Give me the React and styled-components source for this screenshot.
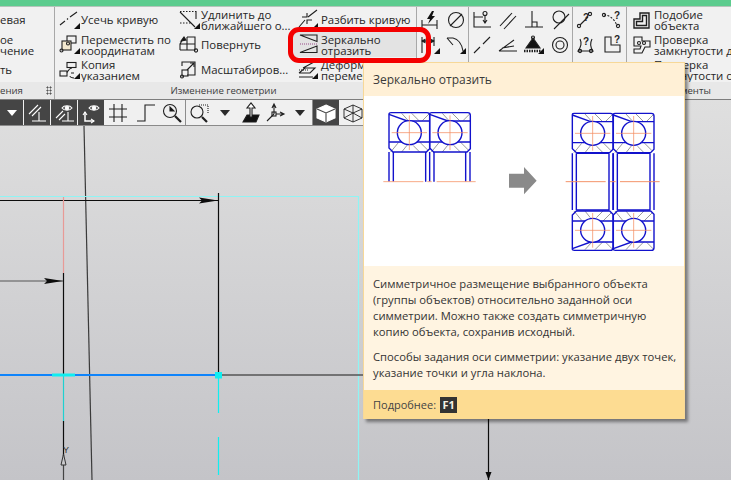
import React from "react";
import styled, {createGlobalStyle} from "styled-components";

const GlobalStyle = createGlobalStyle`
  html, body {
    margin: 0;
    padding: 0;
    background: #d0d0d2;
  }
  * {
    box-sizing: border-box;
  }
`;

const UI_FONT = `"Open Sans", "Noto Sans", "Liberation Sans", sans-serif`;

const Page = styled.div`
  position: relative;
  width: 731px;
  height: 480px;
  overflow: hidden;
  display: flex;
  flex-direction: column;
  font-family: ${UI_FONT};
  color: #262626;
  background: #f0f0f0;
`;

const TitleStrip = styled.div`
  height: 7px;
  flex: none;
  background: #5ccc8e;
  border-bottom: 1px solid #b5c4bb;
`;

const Ribbon = styled.div`
  height: 93px;
  flex: none;
  display: flex;
  background: #f1f1f1;
  border-bottom: 1px solid #7d7d7d;
`;

const Group = styled.section`
  width: ${(p) => (p.$width ? `${p.$width}px` : "auto")};
  flex: ${(p) => (p.$width ? "none" : "1")};
  min-width: 0;
  display: flex;
  flex-direction: column;
  border-right: ${(p) => (p.$last ? "none" : "1px solid #a8a8a8")};
  overflow: hidden;
`;

const GroupBody = styled.div`
  height: 75px;
  display: grid;
  grid-template-columns: ${(p) => p.$cols};
  grid-template-rows: repeat(3, 25px);
  grid-auto-flow: ${(p) => p.$flow || "row"};
`;

const GroupLabel = styled.div`
  flex: 1;
  display: flex;
  align-items: center;
  justify-content: ${(p) => p.$justify || "center"};
  padding: 0 ${(p) => p.$padRight || 0}px 0 0;
  background: #e8e8e8;
  font-size: 9.6px;
  color: #3c3c3c;
  white-space: nowrap;
`;

const Grip = styled.span`
  width: 6px;
  height: 9px;
  margin-right: 2px;
  background-image: radial-gradient(#555 45%, transparent 50%);
  background-size: 3px 3px;
`;

const Item = styled.div`
  display: flex;
  align-items: center;
  gap: ${(p) => p.$gap || 0}px;
  padding-left: ${(p) => p.$pad || 0}px;
  min-width: 0;
  background: ${(p) => (p.$active ? "#e3e3e3" : "transparent")};
  font-size: 11.4px;
  line-height: 11px;
  white-space: nowrap;
`;

const Cell = styled.div`
  display: flex;
  align-items: center;
  justify-content: center;
`;

const Glyph = styled.svg`
  width: 22px;
  height: 22px;
  flex: none;
  fill: none;
  stroke: currentColor;
  stroke-width: 1.1;
  color: #1f1f1f;
`;

const Workspace = styled.main`
  flex: 1;
  min-height: 0;
  display: flex;
  flex-direction: column;
  background: linear-gradient(#dfdfdf, #c4c4c8);
`;

const Toolbar = styled.div`
  width: 400px;
  height: 26px;
  flex: none;
  display: flex;
  background: #f0f0f0;
  border-bottom: 1px solid #8a8a8a;
`;

const Tool = styled.div`
  width: ${(p) => p.$width || 26}px;
  flex: none;
  display: flex;
  align-items: center;
  justify-content: center;
  background: ${(p) => (p.$dark ? "#454545" : "transparent")};
  border-right: ${(p) => (p.$split ? `1px solid ${p.$dark ? "#f0f0f0" : "#8d8d8d"}` : "none")};

  ${Glyph} {
    color: ${(p) => (p.$dark ? "#fff" : "#1f1f1f")};
  }
`;

const Caret = styled.span`
  width: 0;
  height: 0;
  border-left: 5px solid transparent;
  border-right: 5px solid transparent;
  border-top: 6px solid ${(p) => (p.$light ? "#fff" : "#2a2a2a")};
`;

const Drawing = styled.svg`
  flex: 1;
  min-height: 0;
  display: block;
  width: 731px;
`;

const Tooltip = styled.aside`
  position: absolute;
  left: 363px;
  top: 62px;
  width: 322px;
  height: 357px;
  display: flex;
  flex-direction: column;
  border: 1px solid #f7d898;
  border-bottom: none;
  box-shadow: 3px 3px 3px rgba(0, 0, 0, 0.42);
  background: #fff;
`;

const TipTitle = styled.header`
  height: 33px;
  flex: none;
  display: flex;
  align-items: center;
  padding-left: 9px;
  background: #fff0d6;
  font-size: 12px;
  color: #3a3a3a;
`;

const TipPicture = styled.svg`
  width: 320px;
  height: 170px;
  flex: none;
  display: block;
  background: #fff;
`;

const TipBody = styled.div`
  flex: 1;
  padding: 10px 9px 0;
  background: #fff4e1;
  font-size: 11.25px;
  line-height: 16px;
  color: #333;
`;

const TipText = styled.p`
  margin: 0 0 9px;
  white-space: nowrap;
`;

const TipFooter = styled.footer`
  height: 29px;
  flex: none;
  display: flex;
  align-items: center;
  gap: 4px;
  padding-left: 9px;
  background: #fddc92;
  font-size: 11px;
  color: #444;
`;

const KeyCap = styled.span`
  width: 17px;
  height: 16px;
  display: flex;
  align-items: center;
  justify-content: center;
  background: #333;
  color: #f4f0e4;
  font-size: 11px;
  font-weight: 700;
`;

const Callout = styled.div`
  position: absolute;
  left: 288px;
  top: 27px;
  width: 143px;
  height: 36px;
  border: 5px solid #f40000;
  border-radius: 11px;
`;

const Icon = ({corner, children}) => (
  <Glyph viewBox="0 0 22 22">
    {children}
    {corner && <path d="M21 14V20H15Z" fill="#111" stroke="none"/>}
  </Glyph>
);

const Ask = ({x, y}) => (
  <text x={x} y={y} fontSize="10" fontWeight="700" fill="currentColor" stroke="none" fontFamily="Liberation Sans">?</text>
);

const leftItems = [
  {id: "a", lines: ["евая"]},
  {id: "b", lines: ["ое", "чение"]},
  {id: "c", lines: ["ть"]},
];

// columns of the geometry group, top to bottom
const geometryItems = [
  {lines: ["Усечь кривую"], pad: 4, corner: true, draw: <path d="M1 16L6 12M11 8L18 3M8 10.5L9 9.5"/>},
  {lines: ["Переместить по", "координатам"], pad: 4, corner: true, draw: (
    <>
      <rect x="8" y="2" width="9" height="7"/>
      <rect x="3" y="7" width="9" height="9" fill="#f3e9cf"/>
      <circle cx="9" cy="9.5" r="1.5"/>
      <circle cx="2.5" cy="16.5" r="1.5"/>
    </>
  )},
  {lines: ["Копия", "указанием"], pad: 4, corner: true, draw: (
    <>
      <rect x="8" y="3.5" width="9" height="5"/>
      <rect x="1" y="12" width="7" height="5"/>
      <path d="M8 13.5C10 10 12 9 13 9M12 14H15M11 17C11 18 13 19 15 19"/>
    </>
  )},
  {lines: ["Удлинить до", "ближайшего о..."], pad: 1, corner: true, draw: (
    <>
      <path d="M1 3L16 18M17 2V10" />
      <path d="M1 2.5H17M1 14H13" strokeDasharray="1.5 1.5"/>
    </>
  )},
  {lines: ["Повернуть"], pad: 1, draw: (
    <>
      <path d="M1 16H16V3H8M1 16V10H16M8 3V16M1 10L4 5"/>
      <path d="M2 7L5 3L7 6Z" fill="#111"/>
      <circle cx="17" cy="16.5" r="1.6"/>
    </>
  )},
  {lines: ["Масштабиров..."], pad: 1, draw: (
    <>
      <path d="M3 7V3H16V16H8"/>
      <rect x="3" y="11" width="6" height="6"/>
      <path d="M8 11L15 4M11 4H15V8"/>
      <circle cx="3" cy="17.5" r="1.5"/>
    </>
  )},
  {lines: ["Разбить кривую"], pad: 4, gap: 2, corner: true, draw: <path d="M2 18L8 11M11 8L20 1M5 8H10V4M10 15V11H15"/>},
  {lines: ["Зеркально", "отразить"], pad: 4, gap: 2, active: true, draw: (
    <>
      <path d="M3 1H20V7.5ZM3 18.5H20V12Z"/>
      <path d="M3 10H20" stroke="#9a4a8a" strokeDasharray="1 1"/>
    </>
  )},
  {lines: ["Деформация", "перемещением"], pad: 4, gap: 2, corner: true, draw: (
    <>
      <path d="M2 18H16M2 14H13L18 9H8L2 14M6 9L17 3"/>
      <path d="M2 11H12" strokeDasharray="1 1"/>
    </>
  )},
];

const dimensionIcons = [
  {id: "power", draw: <><path d="M13 2L8 10H11L9 15L16 7H13L15 2Z" fill="#111" stroke="none"/><path d="M3 11V20M18 11V20M3 16H18"/></>},
  {id: "slash", draw: <><circle cx="11" cy="11" r="7.5"/><path d="M5 17L17 5"/></>},
  {id: "span", corner: true, draw: <path d="M3 3V19M15 3V12M3 7H15M3 7L6 5.5V8.5ZM15 7L12 5.5V8.5Z"/>},
  {id: "arc", corner: true, draw: <path d="M2 4H8C13 5 17 10 18 17M2 4L8 11"/>},
  {id: "d1", draw: <path d="M5 7V20M17 7V20"/>},
  {id: "d2", draw: <circle cx="11" cy="11" r="6"/>},
];

const constraintIcons = [
  {id: "anchor", draw: <><path d="M3 3V18H20M3 8H12M14 7V13M12 11L14 14L16 11"/><circle cx="14" cy="4.5" r="2"/></>},
  {id: "parallel", draw: <path d="M3 17L15 4M7 20L19 7"/>},
  {id: "perp", draw: <path d="M2 18H20M9 2V18M9 13H14V18"/>},
  {id: "tangent", draw: <><circle cx="10" cy="8" r="6"/><path d="M5 20L20 5"/></>},
  {id: "line", draw: <path d="M3 19L9 13M12 10L19 3"/>},
  {id: "angle", draw: <path d="M2 17L17 6M2 17H20M5 14L17 12"/>},
  {id: "fixed", corner: true, draw: <><path d="M10 4L3 14H17Z" fill="#111"/><circle cx="10" cy="3.5" r="1.5"/><path d="M1 17H18" strokeWidth="2.5" strokeDasharray="1.5 1"/></>},
  {id: "ring", draw: <><circle cx="11" cy="11" r="7.5"/><circle cx="11" cy="11" r="4"/></>},
  {id: "k1", draw: <path d="M5 6V20"/>},
  {id: "k2", draw: <path d="M6 6H16V20"/>},
  {id: "k3", draw: <path d="M11 6V20"/>},
  {id: "k4", draw: <circle cx="11" cy="11" r="5"/>},
];

const checkIcons = [
  {id: "c1", draw: <><path d="M5 16L13 8"/><circle cx="4" cy="17" r="1.6"/><circle cx="15" cy="5" r="1.6"/><Ask x="8" y="12"/></>},
  {id: "c2", draw: <><path d="M3 6C8 6 14 10 16 17" strokeDasharray="2 1.5"/><circle cx="3" cy="6" r="1.6"/><circle cx="17" cy="17" r="1.6"/><Ask x="13" y="10"/></>},
  {id: "c3", draw: <><path d="M5 5C7 9 6 13 3 17H18C15 13 15 9 17 5"/><circle cx="5" cy="17" r="1.6"/><circle cx="16" cy="17" r="1.6"/><Ask x="8" y="11"/></>},
  {id: "c4", draw: <><path d="M4 3V18H19V11H10V3Z"/><Ask x="13" y="9"/></>},
  {id: "c5", draw: <path d="M4 6H18"/>},
  {id: "c6", draw: <path d="M9 6V20"/>},
];

const toolItems = [
  {id: "menu", dark: true, width: 24, split: true, caret: "light"},
  {id: "parallelPerp", dark: true, width: 27, split: true, draw: <path d="M3 12L12 3M6 14L15 5M13 10V19M6 19H20"/>},
  {id: "eyePerp", dark: true, width: 27, split: true, draw: <><path d="M9 6C11 3 17 3 19 6C17 9 11 9 9 6Z"/><circle cx="14" cy="6" r="1.8" fill="#fff"/><path d="M3 16L10 9M6 18L12 12M15 10V19M9 19H21"/></>},
  {id: "eyeAxes", dark: true, width: 26, draw: <><path d="M9 6C11 3 17 3 19 6C17 9 11 9 9 6Z"/><circle cx="14" cy="6" r="1.8" fill="#fff"/><path d="M5 10V19H14" strokeWidth="1.5"/><path d="M3 13L5 10L7 13M11 17L14 19L11 21"/></>},
  {id: "grid", width: 28, draw: <path d="M2 7H20M2 15H20M7 2V20M15 2V20"/>},
  {id: "step", width: 27, draw: <path d="M2 19H10V3H20"/>},
  {id: "zoomBox", width: 27, split: true, draw: <><circle cx="9" cy="9" r="6.5"/><path d="M9 5V9H13Z" fill="#111"/><path d="M14 14L20 20" strokeWidth="2.2"/></>},
  {id: "zoomDot", width: 26, draw: <><circle cx="9" cy="10" r="6"/><path d="M14 15L19 20" strokeWidth="2.2"/><path d="M11 3H20V12" strokeDasharray="1 1"/></>},
  {id: "caretA", width: 26, caret: "dark"},
  {id: "normal", width: 24, draw: <><path d="M4 20L8 13H20L17 20Z" fill="#111"/><path d="M11 15V6H8L12 1L16 6H13V15Z" fill="#fff"/></>},
  {id: "axes", width: 26, draw: <><path d="M10 12V3M8 6L10 2L12 6M10 12L3 19M12 12H19M16 10L20 12L16 14"/><rect x="8" y="10" width="4" height="4"/></>},
  {id: "caretB", width: 25, split: true, caret: "dark"},
  {id: "solid", dark: true, width: 26, draw: <><path d="M11 3L20 7V16L11 20L2 16V7Z" fill="#fff" stroke="#fff"/><path d="M2 7L11 11L20 7M11 11V20" stroke="#454545"/></>},
  {id: "wire", width: 28, draw: <path d="M11 3L20 7V16L11 20L2 16V7ZM2 7L11 11L20 7M11 11V20M11 3V11M2 16L11 11L20 16" strokeWidth="0.9"/>},
];

// one half of a bearing section, drawn in the 3x units of the tooltip picture
const BearingHalf = ({x, y, flip}) => (
  <g transform={flip ? `translate(${x} ${y}) scale(1 -1)` : `translate(${x} ${y})`}>
    <g stroke="#808080" strokeWidth="2.4">
      <path d="M38 2L58 24M68 2L92 26M100 24L120 4M5 118L28 90M92 88L116 112M38 118L54 98M72 98L92 118"/>
    </g>
    <g stroke="#1212cc" strokeWidth="4.2" fill="none">
      <path d="M0 4Q0 0 6 0H114Q122 0 122 8V108L112 118H12L0 106Z"/>
      <path d="M0 5L55 25H122M0 88H122"/>
      <circle cx="61" cy="60" r="36" fill="#fff"/>
    </g>
    <path d="M8 60H114M61 8V112" stroke="#f28a5e" strokeWidth="2.2"/>
  </g>
);

const Bore = ({x}) => (
  <path d={`M${x} 172V342M${x + 12} 172V342M${x + 110} 172V342M${x + 122} 172V342M${x + 12} 172H${x + 110}M${x + 12} 342H${x + 110}`} stroke="#1212cc" strokeWidth="4.2" fill="none"/>
);

const BearingPicture = () => (
  <TipPicture viewBox="0 0 960 510">
    <BearingHalf x={75} y={50}/>
    <BearingHalf x={197} y={50}/>
    <path d="M75 168V257M88 168V257M185 168V257M197 168V257M210 168V257M305 168V257M318 168V257" stroke="#1212cc" strokeWidth="4.2" fill="none"/>
    <path d="M58 257H178M190 257H203M218 257H335" stroke="#f6a27c" strokeWidth="2.8"/>

    <path d="M435 233H480V213L518 254L480 295V275H435Z" fill="#8a8a8a"/>

    <BearingHalf x={625} y={52}/>
    <BearingHalf x={748} y={52}/>
    <BearingHalf x={625} y={463} flip/>
    <BearingHalf x={748} y={463} flip/>
    <Bore x={625}/>
    <Bore x={748}/>
    <path d="M605 257H725M738 257H755M768 257H887" stroke="#f28a5e" strokeWidth="2.8"/>
  </TipPicture>
);

// the sketch is drawn in page coordinates so it can be read against the screenshot
const SketchLayer = () => (
  <Drawing viewBox="0 126 731 354">
    <path d="M84 126L92 480" stroke="#3a3a3a" strokeWidth="1.2"/>
    <path d="M0 196.5H358.5V480" stroke="#8ff4f4" strokeWidth="1.2" fill="none"/>
    <path d="M0 200.5H218" stroke="#0c0c0c" strokeWidth="1.1"/>
    <path d="M199 197.5L218 200.5L199 203.5L202 200.5Z" fill="#0c0c0c"/>
    <path d="M218.5 193V375" stroke="#0c0c0c" strokeWidth="1.2"/>
    <path d="M63.5 197V273" stroke="#e89a96" strokeWidth="1.2"/>
    <path d="M63.5 273V375" stroke="#0c0c0c" strokeWidth="1.2"/>
    <path d="M63.5 375V421" stroke="#1fd0d0" strokeWidth="1.2"/>
    <path d="M63.5 421V456" stroke="#0c0c0c" strokeWidth="1.2"/>
    <path d="M63.5 465V480" stroke="#444" strokeWidth="1.2"/>
    <path d="M63.5 454L61 465H66Z" fill="#c9c9cc" stroke="#333"/>
    <text x="63" y="453" fontSize="9" fill="#333" fontFamily="Liberation Sans">Y</text>
    <path d="M0 281H63" stroke="#555" strokeWidth="1.1"/>
    <path d="M44 278L63 281L44 284L47 281Z" fill="#0c0c0c"/>
    <path d="M222 375H363" stroke="#555" strokeWidth="1.6"/>
    <path d="M0 375H216" stroke="#0f84fb" strokeWidth="2"/>
    <path d="M52 375H75" stroke="#10eef0" strokeWidth="3"/>
    <rect x="215" y="372" width="7" height="6.5" fill="#10eef0"/>
    <path d="M218.5 378V413M218.5 437V475" stroke="#10eef0" strokeWidth="1.2"/>
    <path d="M488.5 419V480" stroke="#0c0c0c" strokeWidth="1.2"/>
    <path d="M485.5 472L488.5 480L491.5 472Z" fill="#0c0c0c"/>
  </Drawing>
);

const App = () => {
  const renderCell = (icon) => (
    <Cell key={icon.id}>
      <Icon corner={icon.corner}>{icon.draw}</Icon>
    </Cell>
  );

  return (
    <Page>
      <GlobalStyle/>
      <TitleStrip/>
      <Ribbon>
        <Group $width={55}>
          <GroupBody $cols="1fr">
            {leftItems.map((item) => (
              <Item key={item.id}>
                <div>{item.lines.map((line) => <div key={line}>{line}</div>)}</div>
              </Item>
            ))}
          </GroupBody>
          <GroupLabel $justify="space-between">
            <span>ения</span>
            <Grip/>
          </GroupLabel>
        </Group>

        <Group $width={362}>
          <GroupBody $cols="123px 115px 1fr" $flow="column">
            {geometryItems.map((item) => (
              <Item key={item.lines[0]} $pad={item.pad} $gap={item.gap} $active={item.active}>
                <Icon corner={item.corner}>{item.draw}</Icon>
                <div>{item.lines.map((line) => <div key={line}>{line}</div>)}</div>
              </Item>
            ))}
          </GroupBody>
          <GroupLabel $padRight={24}>Изменение геометрии</GroupLabel>
        </Group>

        <Group $width={52}>
          <GroupBody $cols="26px 26px">{dimensionIcons.map(renderCell)}</GroupBody>
          <GroupLabel/>
        </Group>

        <Group $width={104}>
          <GroupBody $cols="repeat(4, 26px)">{constraintIcons.map(renderCell)}</GroupBody>
          <GroupLabel/>
        </Group>

        <Group $width={54}>
          <GroupBody $cols="26px 26px">{checkIcons.map(renderCell)}</GroupBody>
          <GroupLabel/>
        </Group>

        <Group $last>
          <GroupBody $cols="1fr">
            <Item $pad={4} $gap={1}>
              <Icon><path d="M3 19V10H9V4H18V19ZM5.5 16.5V12.5H11.5V6.5H15.5V16.5Z" strokeWidth="1.4"/></Icon>
              <div><div>Подобие</div><div>объекта</div></div>
            </Item>
            <Item $pad={4} $gap={1}>
              <Icon><path d="M3 3H11V7H19V13H14L11 19H3V15H9L10 12H3Z"/><circle cx="8" cy="9" r="1.5"/><circle cx="13" cy="9" r="1.5"/></Icon>
              <div><div>Проверка</div><div>замкнутости д...</div></div>
            </Item>
            <Item $pad={4} $gap={1}>
              <Icon><path d="M3 5H19V18H3Z"/></Icon>
              <div><div>Проверка</div><div>замкнутости о...</div></div>
            </Item>
          </GroupBody>
          <GroupLabel>Инструменты</GroupLabel>
        </Group>
      </Ribbon>

      <Workspace>
        <Toolbar>
          {toolItems.map((tool) => (
            <Tool key={tool.id} $dark={tool.dark} $width={tool.width} $split={tool.split}>
              {tool.caret ? <Caret $light={tool.caret === "light"}/> : <Icon>{tool.draw}</Icon>}
            </Tool>
          ))}
        </Toolbar>
        <SketchLayer/>
      </Workspace>

      <Tooltip>
        <TipTitle>Зеркально отразить</TipTitle>
        <BearingPicture/>
        <TipBody>
          <TipText>
            Симметричное размещение выбранного объекта<br/>
            (группы объектов) относительно заданной оси<br/>
            симметрии. Можно также создать симметричную<br/>
            копию объекта, сохранив исходный.
          </TipText>
          <TipText>
            Способы задания оси симметрии: указание двух точек,<br/>
            указание точки и угла наклона.
          </TipText>
        </TipBody>
        <TipFooter>
          Подробнее:
          <KeyCap>F1</KeyCap>
        </TipFooter>
      </Tooltip>

      <Callout/>
    </Page>
  );
};

export default App;
